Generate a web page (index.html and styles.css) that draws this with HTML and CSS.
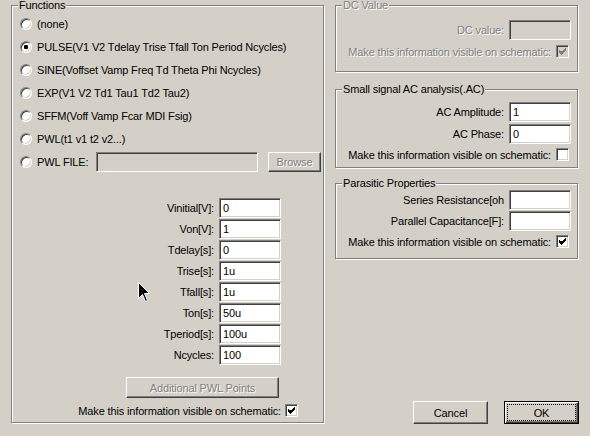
FILE: index.html
```html
<!DOCTYPE html>
<html lang="en">
<head>
    <meta charset="UTF-8">
    <title>Independent Voltage Source - PULSE</title>
    <link rel="stylesheet" href="styles.css">
</head>
<body>
    <div class="dialog">
        <fieldset class="group functions">
            <legend>Functions</legend>
            <div class="choices">
                <div class="choice"><span class="radio"></span>(none)</div>
                <div class="choice"><span class="radio on"></span>PULSE(V1 V2 Tdelay Trise Tfall Ton Period Ncycles)</div>
                <div class="choice"><span class="radio"></span>SINE(Voffset Vamp Freq Td Theta Phi Ncycles)</div>
                <div class="choice"><span class="radio"></span>EXP(V1 V2 Td1 Tau1 Td2 Tau2)</div>
                <div class="choice"><span class="radio"></span>SFFM(Voff Vamp Fcar MDI Fsig)</div>
                <div class="choice"><span class="radio"></span>PWL(t1 v1 t2 v2...)</div>
                <div class="choice">
                    <span class="radio"></span>
                    <span class="file-label">PWL FILE:</span>
                    <span class="field off file-path"></span>
                    <span class="btn off browse">Browse</span>
                </div>
            </div>

            <div class="params">
                <span>Vinitial[V]:</span><span class="field">0</span>
                <span>Von[V]:</span><span class="field">1</span>
                <span>Tdelay[s]:</span><span class="field">0</span>
                <span>Trise[s]:</span><span class="field">1u</span>
                <span>Tfall[s]:</span><span class="field">1u</span>
                <span>Ton[s]:</span><span class="field">50u</span>
                <span>Tperiod[s]:</span><span class="field">100u</span>
                <span>Ncycles:</span><span class="field">100</span>
            </div>

            <div class="btn off more">Additional PWL Points</div>

            <div class="row show-row">
                <span>Make this information visible on schematic:</span>
                <span class="check on"><svg width="13" height="13" viewBox="0 0 13 13"><path d="M9 3H10V6H9V7H8V8H7V9H6V10H5V9H4V8H3V5H4V6H7V5H8V4H9Z"/></svg></span>
            </div>
        </fieldset>

        <div class="side">
            <fieldset class="group dc">
                <legend class="dim">DC Value</legend>
                <div class="row first">
                    <span class="dim">DC value:</span>
                    <span class="field off"></span>
                </div>
                <div class="row check-row">
                    <span class="dim">Make this information visible on schematic:</span>
                    <span class="check on off"><svg width="13" height="13" viewBox="0 0 13 13"><path d="M9 3H10V6H9V7H8V8H7V9H6V10H5V9H4V8H3V5H4V6H7V5H8V4H9Z"/></svg></span>
                </div>
            </fieldset>

            <fieldset class="group ac">
                <legend>Small signal AC analysis(.AC)</legend>
                <div class="row first">
                    <span>AC Amplitude:</span>
                    <span class="field">1</span>
                </div>
                <div class="row second">
                    <span>AC Phase:</span>
                    <span class="field">0</span>
                </div>
                <div class="row check-row">
                    <span>Make this information visible on schematic:</span>
                    <span class="check"></span>
                </div>
            </fieldset>

            <fieldset class="group parasitic">
                <legend>Parasitic Properties</legend>
                <div class="row first">
                    <span class="cut">Series Resistance[oh</span>
                    <span class="field"></span>
                </div>
                <div class="row tight">
                    <span>Parallel Capacitance[F]:</span>
                    <span class="field"></span>
                </div>
                <div class="row check-row">
                    <span>Make this information visible on schematic:</span>
                    <span class="check on"><svg width="13" height="13" viewBox="0 0 13 13"><path d="M9 3H10V6H9V7H8V8H7V9H6V10H5V9H4V8H3V5H4V6H7V5H8V4H9Z"/></svg></span>
                </div>
            </fieldset>

            <div class="actions">
                <span class="btn">Cancel</span>
                <span class="btn default"><span class="focus">OK</span></span>
            </div>
        </div>
    </div>

    <svg class="cursor" width="13" height="21" viewBox="0 0 13 21">
        <path d="M0.5 0.5V16.5L4.5 12.5L7.5 19.5L9.5 18.5L6.5 11.5H11.5Z" fill="#000" stroke="#fff" stroke-width="1"/>
    </svg>
</body>
</html>
```

FILE: styles.css
```css
body {
    margin: 0;
    width: 590px;
    height: 436px;
    overflow: hidden;
    position: relative;
    background-color: #D4D0C8;
    font-family: 'Liberation Sans', Arial, sans-serif;
    font-size: 11px;
    letter-spacing: -0.15px;
    color: #000;
}
.dialog {
    display: flex;
    gap: 11px;
    padding-left: 11px;
    height: 436px;
}
.group {
    box-sizing: border-box;
    margin: 0;
    padding: 0 0 0 8px;
    min-width: 0;
    border: 1px solid #808080;
    box-shadow: inset 1px 1px 0 #fff, 1px 1px 0 #fff;
}
.group legend {
    margin-left: -2px;
    padding: 0 1px;
    line-height: 11px;
    background-color: #D4D0C8;
}
.dim {
    color: #808080;
    text-shadow: 1px 1px 0 #fff;
}

/* left box */
.functions {
    width: 313px;
    height: 423px;
}
.choices {
    padding-top: 1px;
}
.choice {
    display: flex;
    align-items: center;
    height: 23px;
    white-space: nowrap;
}
.radio {
    position: relative;
    box-sizing: border-box;
    width: 12px;
    height: 12px;
    margin-right: 5px;
    border-radius: 50%;
    border: 1px solid;
    border-color: #808080 #fff #fff #808080;
    box-shadow: inset 1px 1px 0 #404040, inset -1px -1px 0 #D4D0C8;
    background-color: #fff;
}
.radio.on::after {
    content: '';
    position: absolute;
    left: 3px;
    top: 3px;
    width: 4px;
    height: 4px;
    border-radius: 1px;
    background-color: #000;
}
.file-label {
    width: 59px;
}
.field {
    box-sizing: border-box;
    display: block;
    width: 62px;
    height: 20px;
    padding: 2px 3px;
    line-height: 14px;
    border: 1px solid;
    border-color: #808080 #fff #fff #808080;
    box-shadow: inset 1px 1px 0 #404040, inset -1px -1px 0 #D4D0C8;
    background-color: #fff;
}
.field.off {
    background-color: #D4D0C8;
}
.file-path {
    width: 162px;
}
.btn {
    box-sizing: border-box;
    display: flex;
    justify-content: center;
    align-items: center;
    border: 1px solid;
    border-color: #fff #404040 #404040 #fff;
    box-shadow: inset -1px -1px 0 #808080;
    background-color: #D4D0C8;
}
.btn.off {
    color: #808080;
    text-shadow: 1px 1px 0 #fff;
}
.browse {
    width: 53px;
    height: 20px;
    margin-left: 10px;
}
.params {
    display: grid;
    grid-template-columns: 1fr 62px;
    column-gap: 5px;
    row-gap: 1px;
    align-items: center;
    justify-items: end;
    margin: 25px 42px 0 0;
}
.more {
    width: 153px;
    height: 21px;
    margin: 12px 0 0 106px;
}
.row {
    display: flex;
    justify-content: flex-end;
    align-items: center;
    gap: 5px;
    white-space: nowrap;
}
.show-row {
    margin: 6px 25px 0 0;
    gap: 4px;
}
.check {
    box-sizing: border-box;
    display: block;
    width: 13px;
    height: 13px;
    border: 1px solid;
    border-color: #808080 #fff #fff #808080;
    box-shadow: inset 1px 1px 0 #404040, inset -1px -1px 0 #D4D0C8;
    background-color: #fff;
}
.check svg {
    display: block;
    margin: -1px;
}
.check.off {
    background-color: #D4D0C8;
}
.check.off svg {
    fill: #808080;
}

/* right column */
.side {
    display: flex;
    flex-direction: column;
    width: 244px;
    height: 424px;
}
.side .group {
    width: 243px;
}
.side .row {
    margin-right: 6px;
}
.side .check-row {
    margin-right: 8px;
}
.dc {
    height: 72px;
}
.dc .first {
    margin-top: 9px;
}
.dc .check-row {
    margin-top: 5px;
}
.ac {
    height: 84px;
    margin-top: 12px;
}
.ac .first {
    margin-top: 7px;
}
.ac .second {
    margin-top: 2px;
}
.ac .check-row {
    margin-top: 4px;
}
.parasitic {
    height: 81px;
    margin-top: 10px;
}
.parasitic .first {
    margin-top: 1px;
}
.parasitic .tight {
    margin-top: 1px;
}
.parasitic .check-row {
    margin-top: 4px;
}
.actions {
    display: flex;
    justify-content: flex-end;
    gap: 16px;
    margin-top: auto;
}
.actions .btn {
    width: 75px;
    height: 23px;
}
.btn.default {
    border: 1px solid #000;
    box-shadow: inset 1px 1px 0 #fff, inset -1px -1px 0 #404040, inset -2px -2px 0 #808080;
}
.focus {
    box-sizing: border-box;
    display: flex;
    justify-content: center;
    align-items: center;
    width: 67px;
    height: 15px;
    outline: 1px dotted #000;
}
.cursor {
    position: absolute;
    left: 138px;
    top: 282px;
}
```
